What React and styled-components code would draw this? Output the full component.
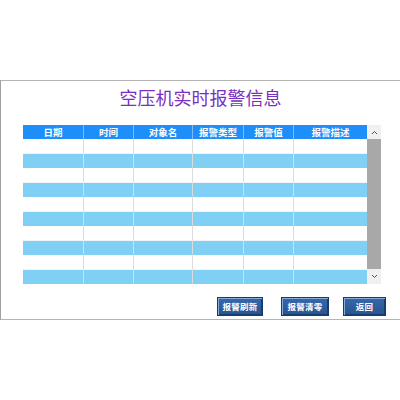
import React from "react";
import styled, { createGlobalStyle } from "styled-components";

const Global = createGlobalStyle`
  html, body { margin: 0; padding: 0; background: #ffffff; overflow: hidden; }
  body { width: 400px; height: 400px; font-family: "Noto Sans CJK SC", "Noto Sans", sans-serif; }
`;

const Frame = styled.div`
  margin-top: 80px;
  height: 238px;
  border-top: 1px solid #b4b4b4;
  border-bottom: 1px solid #b4b4b4;
  border-left: 1px solid #a0a0a0;
  display: flex;
  flex-direction: column;
`;

const Title = styled.h1`
  margin: 7px 0 0 0;
  height: 18px;
  line-height: 18px;
  font-size: 18px;
  font-weight: 400;
  color: #7a2fc2;
  text-align: center;
`;

const TableWrap = styled.div`
  margin: 19px 0 0 22px;
  display: flex;
  width: 358px;
`;

const COLS = "60px 50px 59px 51px 50px 74px";

const Grid = styled.div`
  width: 344px;
  display: grid;
  grid-template-columns: ${COLS};
  grid-template-rows: 14px repeat(10, 14.5px);
`;

const HeadCell = styled.div`
  background: #1e8ef8;
  color: #ffffff;
  font-size: 9.5px;
  font-weight: 700;
  line-height: 14px;
  text-align: center;
  border-left: ${(p) => (p.$first ? "none" : "1px solid #7dbbf7")};
  white-space: nowrap;
  overflow: hidden;
`;

const Cell = styled.div`
  background: ${(p) => (p.$alt ? "#7fd0f4" : "#ffffff")};
  border-left: ${(p) => (p.$first ? "none" : "1px solid #dcdcdc")};
  border-bottom: 1px solid ${(p) => (p.$alt ? "#7fd0f4" : "#eef6fb")};
  box-sizing: border-box;
`;

const Scrollbar = styled.div`
  width: 14px;
  display: flex;
  flex-direction: column;
  background: #f0f0f0;
`;

const ArrowBox = styled.div`
  height: ${(p) => p.$h}px;
  display: flex;
  align-items: center;
  justify-content: center;
  background: #f0f0f0;
`;

const Thumb = styled.div`
  flex: 1;
  background: #a8a8a8;
`;

const ButtonRow = styled.div`
  display: flex;
  justify-content: flex-end;
  margin: 13px 0 0 0;
  padding-right: 14px;
`;

const Btn = styled.button`
  width: ${(p) => p.$w}px;
  height: 19px;
  margin-left: ${(p) => p.$ml}px;
  padding: 0;
  background: linear-gradient(#3668aa, #27548f);
  border: 1px solid #1a3a6a;
  box-shadow: inset 1px 1px 0 #86acd9, inset -1px -1px 0 #183d70;
  color: #ffffff;
  font-family: "Noto Sans CJK SC", sans-serif;
  font-size: 8.5px;
  font-weight: 700;
  line-height: 17px;
  letter-spacing: 0.2px;
`;

const heads = ["日期", "时间", "对象名", "报警类型", "报警值", "报警描述"];

function Caret({ down }) {
  return (
    <svg width="7" height="5" viewBox="0 0 7 5">
      <path
        d={down ? "M1 1 L3.5 3.5 L6 1" : "M1 4 L3.5 1.5 L6 4"}
        fill="none"
        stroke="#505050"
        strokeWidth="1"
      />
    </svg>
  );
}

export default function App() {
  const rows = Array.from({ length: 10 }, (_, i) => i);
  return (
    <>
      <Global />
      <Frame>
        <Title>空压机实时报警信息</Title>
        <TableWrap>
          <Grid>
            {heads.map((h, i) => (
              <HeadCell key={h} $first={i === 0}>
                {h}
              </HeadCell>
            ))}
            {rows.map((r) =>
              heads.map((h, i) => (
                <Cell key={r + h} $alt={r % 2 === 1} $first={i === 0} />
              ))
            )}
          </Grid>
          <Scrollbar>
            <ArrowBox $h={14}>
              <Caret />
            </ArrowBox>
            <Thumb />
            <ArrowBox $h={15}>
              <Caret down />
            </ArrowBox>
          </Scrollbar>
        </TableWrap>
        <ButtonRow>
          <Btn $w={46} $ml={0}>报警刷新</Btn>
          <Btn $w={48} $ml={18}>报警清零</Btn>
          <Btn $w={43} $ml={14}>返回</Btn>
        </ButtonRow>
      </Frame>
    </>
  );
}
